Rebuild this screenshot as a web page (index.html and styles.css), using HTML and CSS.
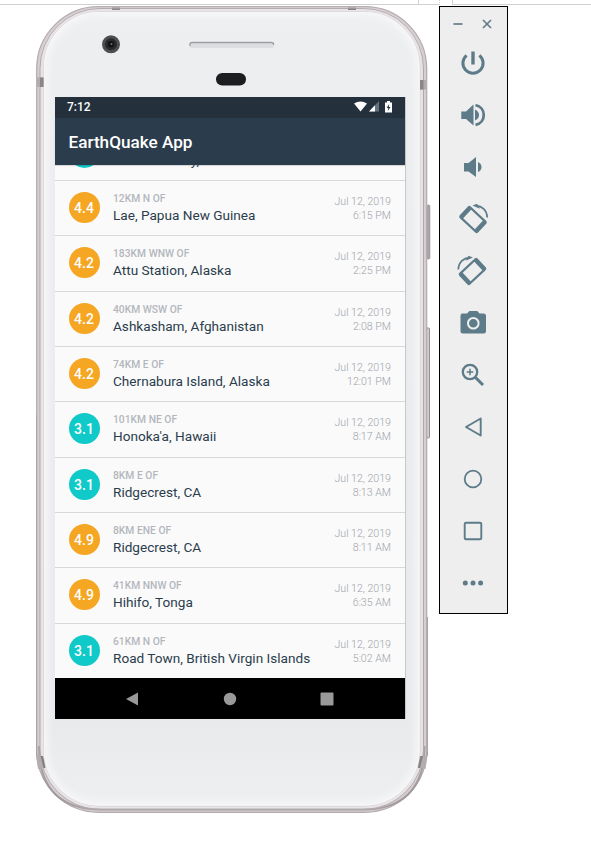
FILE: index.html
```html
<!DOCTYPE html>
<html lang="en">
<head>
<meta charset="utf-8">
<title>EarthQuake App</title>
<link rel="stylesheet" href="styles.css">
</head>
<body>
<svg class="window-edge" viewBox="0 0 591 6" fill="none" stroke="#d0d0d0"><path d="M0 4.5H439M452 4.5H591M418.500 0V4M452.500 0V4"/><path d="M439.500 0V5" stroke-dasharray="1 1"/></svg>
<main class="emulator">
  <section class="phone">
    <svg class="phone-body" viewBox="0 0 396 808">
      <defs>
        <linearGradient id="face" x1="0" y1="0" x2="0" y2="1"><stop offset="0" stop-color="#eeeff1"/><stop offset=".12" stop-color="#ecedef"/><stop offset=".9" stop-color="#e9eaec"/><stop offset="1" stop-color="#eeeff1"/></linearGradient>
        <filter id="soft"><feGaussianBlur stdDeviation="3"/></filter>
      </defs>
      <g fill="#d5cdcf" stroke="#968f92"><rect x="389" y="199" width="5" height="54" rx="1" fill="#aaa6a8" stroke-dasharray="1 1"/><rect x="389" y="322" width="4.500" height="110" rx="1"/></g>
      <rect x=".7" y=".7" width="390" height="805.600" rx="62" fill="#d3cacd" stroke="#b0a8aa" stroke-width="1.200"/>
      <path d="M.5 409V750M391.500 611V750" stroke="#aaa1a4"/>
      <rect x="4" y="2.500" width="383.500" height="801" rx="60" fill="#dfd8da" stroke="#a0979b"/>
      <path d="M3 740Q3 803 65 803.500H327Q388.500 803 388.500 740" fill="none" stroke="#a0979b" stroke-width="2"/>
      <rect x="7.500" y="5.500" width="376.500" height="794.500" rx="56" fill="url(#face)" stroke="#b2abae"/>
      <rect x="9.500" y="7.500" width="372.500" height="790.500" rx="54" fill="none" stroke="#f8f8fa" stroke-width="5" filter="url(#soft)"/>
      <rect x="8.500" y="6.500" width="374.500" height="792.500" rx="55" fill="none" stroke="#f6f6f8" stroke-width="1.500"/>
      <path d="M1 71.500H7.500V81H1ZM384 74H390.500V83.500H384ZM76 1H84V4H76ZM312 1H320V4H312Z" fill="#b3abad"/>
      <path d="M4 71.500H7.500V81H4ZM384 74H387.500V83.500H384ZM76 2.500H84V4H76ZM312 2.500H320V4H312Z" fill="#8c8587"/>
      <path d="M0 750H7L9 761L2 763ZM391.500 750H384L382 761L389.500 763Z" fill="#b3adaf"/>
      <path d="M4.500 750H7L9.500 762H7.500ZM387 750H384.500L382 762H384Z" fill="#858082"/>
      <circle cx="75" cy="38.300" r="9" fill="#4c4e51"/><circle cx="75" cy="38.300" r="6" fill="#292b2d"/><circle cx="75" cy="38.300" r="3.200" fill="#111315"/><circle cx="75.500" cy="38" r="1" fill="#737467"/>
      <rect x="153.500" y="36" width="84.500" height="6" rx="2" fill="#dcdee1"/><path d="M154 40V38Q154 36.500 156 36.500H235Q237.500 36.500 237.500 38V39" fill="none" stroke="#9c9ea3" stroke-width="1.300"/>
      <rect x="180" y="67" width="30" height="12.500" rx="6.250" fill="#1c1d20"/>
    </svg>
    <div class="screen">
      <div class="status">
        <span>7:12</span>
        <svg class="status-icons" viewBox="0 0 40 14"><path d="M0 3.500Q6.500-.7 13 3.500L6.500 11.500Z" fill="#fff"/><path d="M15 11.500L25 1V11.500Z" fill="#65727d"/><path d="M15 11.500L21 5.300V11.500Z" fill="#fff"/><path d="M31 2.500H33V1H36V2.500H38V12.500H31Z" fill="#fff"/><path d="M35.200 4L32.700 8H34.300L33.800 11L36.500 7H34.800Z" fill="#24313d"/></svg>
      </div>
      <h1 class="appbar">EarthQuake App</h1>
      <div class="list">
        <article class="quake partial"><b class="mag low"></b><div class="where"><p>Searles Valley, CA</p></div></article>
        <article class="quake"><b class="mag">4.4</b><div class="where"><small>12KM N OF</small><p>Lae, Papua New Guinea</p></div><time>Jul 12, 2019<br>6:15 PM</time></article>
        <article class="quake"><b class="mag">4.2</b><div class="where"><small>183KM WNW OF</small><p>Attu Station, Alaska</p></div><time>Jul 12, 2019<br>2:25 PM</time></article>
        <article class="quake"><b class="mag">4.2</b><div class="where"><small>40KM WSW OF</small><p>Ashkasham, Afghanistan</p></div><time>Jul 12, 2019<br>2:08 PM</time></article>
        <article class="quake"><b class="mag">4.2</b><div class="where"><small>74KM E OF</small><p>Chernabura Island, Alaska</p></div><time>Jul 12, 2019<br>12:01 PM</time></article>
        <article class="quake"><b class="mag low">3.1</b><div class="where"><small>101KM NE OF</small><p>Honoka'a, Hawaii</p></div><time>Jul 12, 2019<br>8:17 AM</time></article>
        <article class="quake"><b class="mag low">3.1</b><div class="where"><small>8KM E OF</small><p>Ridgecrest, CA</p></div><time>Jul 12, 2019<br>8:13 AM</time></article>
        <article class="quake"><b class="mag">4.9</b><div class="where"><small>8KM ENE OF</small><p>Ridgecrest, CA</p></div><time>Jul 12, 2019<br>8:11 AM</time></article>
        <article class="quake"><b class="mag">4.9</b><div class="where"><small>41KM NNW OF</small><p>Hihifo, Tonga</p></div><time>Jul 12, 2019<br>6:35 AM</time></article>
        <article class="quake"><b class="mag low">3.1</b><div class="where"><small>61KM N OF</small><p>Road Town, British Virgin Islands</p></div><time>Jul 12, 2019<br>5:02 AM</time></article>
      </div>
      <nav class="navbar">
        <svg viewBox="0 0 14 14"><path d="M1 7L13 .5V13.500Z"/></svg>
        <svg viewBox="0 0 14 14"><circle cx="7" cy="7" r="6.200"/></svg>
        <svg viewBox="0 0 14 14"><rect x=".5" y=".5" width="13" height="13" rx="1"/></svg>
      </nav>
    </div>
  </section>
  <aside class="toolbar">
    <div class="window-buttons"><svg viewBox="0 0 10 10"><path d="M.5 5H9.500"/></svg><svg viewBox="0 0 10 10"><path d="M1 1L9 9M9 1L1 9"/></svg></div>
    <svg class="tool" viewBox="0 0 32 32"><path d="M16 4.500V17.500" stroke-width="3.400"/><path d="M9.600 8.300A10.100 10.100 0 1 0 22.400 8.300" stroke-width="3"/></svg>
    <svg class="tool" viewBox="0 0 32 32"><path class="fill" d="M4.300 12.500H9L16.500 5.500V26.500L9 20H4.300ZM18 10.500Q22 12.500 22 16Q22 19.500 18 21.500Z"/><path d="M18.500 6.200C29.500 8 29.500 24 18.500 25.800" stroke-width="2.800"/></svg>
    <svg class="tool" viewBox="0 0 32 32"><path class="fill" d="M7 12H11.500L19 6V26L11.500 20.500H7ZM21 11Q24.500 12.500 24.500 16Q24.500 19.500 21 21Z"/></svg>
    <svg class="tool" viewBox="0 0 32 32"><g id="rotate"><path class="fill" fill-rule="evenodd" transform="translate(16 16.500) rotate(43)" d="M-10.500-8H10.500Q12.500-8 12.500-6V6Q12.500 8 10.500 8H-10.500Q-12.500 8-12.500 6V-6Q-12.500-8-10.500-8ZM-8-5.800V5.800H8V-5.800Z"/><path d="M18.500 2.800C25 2.500 30 7.500 30.200 14.500" stroke-width="1.700"/><path class="fill" d="M15.500 2.500L20 .8L23 5.800Z"/></g></svg>
    <svg class="tool" viewBox="0 0 32 32"><use href="#rotate" transform="matrix(-1 0 0 1 31.500 0)"/></svg>
    <svg class="tool" viewBox="0 0 32 32"><path class="fill" d="M5 6.500H10L12.300 4H20.300L22.500 6.500H26.500Q29 6.500 29 9V24Q29 26.500 26.500 26.500H6Q3.500 26.500 3.500 24V9Q3.500 6.500 5 6.500Z"/><circle cx="16.300" cy="16.200" r="5.300" stroke="#eee" stroke-width="2"/></svg>
    <svg class="tool" viewBox="0 0 32 32"><circle cx="13" cy="13" r="7.200" stroke-width="2.300"/><path d="M18.500 18.500L26 26" stroke-width="3"/><path d="M9.700 13H16.300M13 9.700V16.300" stroke-width="1.500"/></svg>
    <svg class="tool" viewBox="0 0 32 32"><path d="M23.700 7.500V24.500L9 16Z" stroke-width="1.900" stroke-linejoin="round"/></svg>
    <svg class="tool" viewBox="0 0 32 32"><circle cx="16" cy="16" r="8.300" stroke-width="1.800"/></svg>
    <svg class="tool" viewBox="0 0 32 32"><rect x="7.700" y="7.700" width="16.600" height="16.600" rx="1.300" stroke-width="1.900"/></svg>
    <svg class="tool" viewBox="0 0 32 32"><g class="fill"><circle cx="8.300" cy="16" r="2.500"/><circle cx="16" cy="16" r="2.500"/><circle cx="23.600" cy="16" r="2.500"/></g></svg>
  </aside>
</main>
</body>
</html>
```
FILE: styles.css
```css
* { box-sizing: border-box; margin: 0; }
body { width: 591px; height: 858px; background: #fff; font-family: Roboto, sans-serif; overflow: hidden; }
svg { display: block; }
.window-edge { width: 591px; height: 6px; }
.emulator { display: flex; align-items: flex-start; }
.phone { position: relative; width: 392px; height: 807px; margin-left: 36px; padding: 91px 23px 0 19px; }
.phone-body { position: absolute; inset: 0 auto auto 0; width: 396px; height: 808px; }
.screen { position: relative; display: flex; flex-direction: column; width: 350px; height: 622px; background: #fafafa; box-shadow: 1px 0 #c7c8ca; }
.status { display: flex; justify-content: space-between; align-items: center; height: 20.5px; padding: 0 12px; background: #24313d; color: #fff; font-size: 12px; font-weight: 500; }
.status-icons { width: 40px; height: 14px; margin-right: -1px; }
.appbar { height: 47.5px; padding-left: 13.500px; background: #2b3c4c; color: #fff; font-size: 17.150px; line-height: 49px; font-weight: 500; box-shadow: 0 1px 1px #0002; z-index: 1; }
.list { flex: none; display: flex; flex-direction: column; justify-content: flex-end; height: 513px; overflow: hidden; }
.quake { flex: none; display: flex; align-items: center; height: 55.35px; padding: 0 14px 0 13.500px; border-top: 1px solid #d8d8d8; }
.partial .where { padding-top: 14px; }
.mag { width: 31px; height: 31px; margin-top: -1px; border-radius: 50%; background: #f5a623; color: #fff; font-size: 14px; line-height: 32px; font-weight: 500; text-align: center; }
.low { background: #10cac9; }
.where { flex: 1; margin-left: 13.500px; white-space: nowrap; }
.where small { display: block; color: #b3b7bd; font-size: 10.300px; line-height: 14px; font-weight: 500; }
.where p { color: #2b3d4d; font-size: 13.600px; line-height: 18px; }
time { padding-top: 2px; color: #a0a4aa; font-size: 10.600px; line-height: 14px; font-weight: 300; text-align: right; }
.navbar { display: flex; align-items: center; gap: 83.500px; height: 41px; padding-left: 70px; background: #000; }
.navbar svg { width: 14px; height: 14px; fill: #999; }
.toolbar { display: flex; flex-direction: column; align-items: center; gap: 20px; width: 69px; height: 608px; padding-right: 2px; margin-left: 11px; background: #eee; border: 1px solid #000; }
.window-buttons { display: flex; gap: 19px; height: 10px; margin-top: 12px; margin-bottom: -2px; stroke: #607d8b; stroke-width: 1.700; }
.window-buttons svg { width: 10px; height: 10px; }
.tool { width: 32px; height: 32px; fill: none; stroke: #5d7b88; }
.tool .fill { fill: #5d7b88; stroke: none; }
```
